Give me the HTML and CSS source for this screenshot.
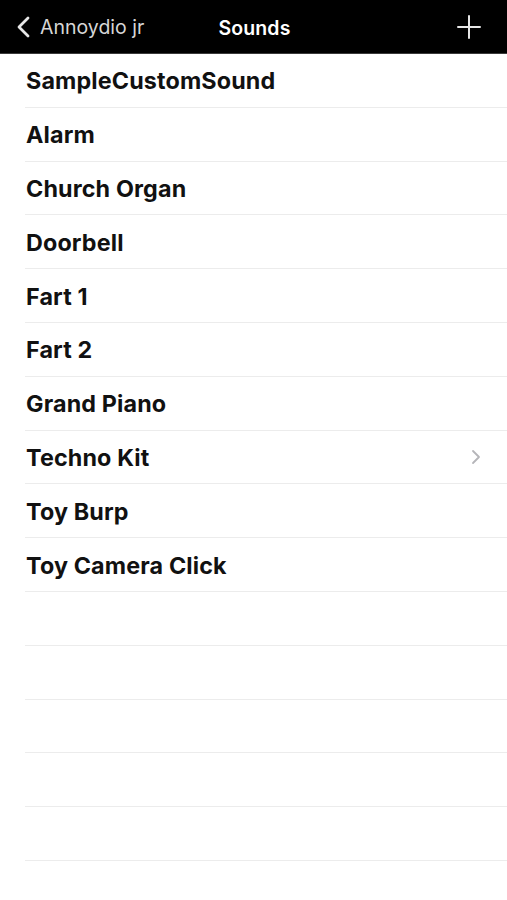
FILE: index.html
```html
<!DOCTYPE html>
<html>
<head>
<meta charset="utf-8">
<link rel="stylesheet" href="styles.css">
</head>
<body>
<header class="nav">
  <div class="nav-left">
    <svg class="back" width="16" height="24" viewBox="0 0 16 24"><path d="M13 3 L4 12 L13 21" fill="none" stroke="#e6e6e6" stroke-width="2.8" stroke-linecap="round" stroke-linejoin="round"/></svg>
    <span class="back-label">Annoydio jr</span>
  </div>
  <div class="nav-title">Sounds</div>
  <div class="nav-right">
    <svg width="24" height="24" viewBox="0 0 24 24"><path d="M12 1 V23 M1 12 H23" stroke="#e6e6e6" stroke-width="2" stroke-linecap="round"/></svg>
  </div>
</header>
<ul class="list">
  <li class="row"><span class="label">SampleCustomSound</span></li>
  <li class="row"><span class="label">Alarm</span></li>
  <li class="row"><span class="label">Church Organ</span></li>
  <li class="row"><span class="label">Doorbell</span></li>
  <li class="row"><span class="label">Fart 1</span></li>
  <li class="row"><span class="label">Fart 2</span></li>
  <li class="row"><span class="label">Grand Piano</span></li>
  <li class="row"><span class="label">Techno Kit</span><svg class="chev" width="10" height="16" viewBox="0 0 10 16"><path d="M2 2 L8 8 L2 14" fill="none" stroke="#b5b5b9" stroke-width="1.8" stroke-linecap="round" stroke-linejoin="round"/></svg></li>
  <li class="row"><span class="label">Toy Burp</span></li>
  <li class="row"><span class="label">Toy Camera Click</span></li>
  <li class="row"></li>
  <li class="row"></li>
  <li class="row"></li>
  <li class="row"></li>
  <li class="row"></li>
</ul>
</body>
</html>
```
FILE: styles.css
```css
* { box-sizing: border-box; }
html, body { margin: 0; padding: 0; background: #fff; }
body { font-family: Inter, "Liberation Sans", sans-serif; width: 507px; height: 900px; overflow: hidden; }
.nav {
  height: 54px;
  background: #000;
  border-bottom: 1px solid #3a3a3a;
  display: grid;
  grid-template-columns: 1fr auto 1fr;
  align-items: center;
  padding: 0 26px 0 15px;
}
.nav-left { display: flex; align-items: center; gap: 9px; color: #d8d8d8; }
.back { margin-top: 1px; }
.back-label { font-size: 19.5px; font-weight: 400; color: #d6d6d6; letter-spacing: 0; }
.nav-title { color: #fff; font-size: 19.5px; font-weight: 600; margin-left: 13px; margin-top: 2px; letter-spacing: 0.1px; }
.nav-right { display: flex; justify-content: flex-end; align-items: center; margin-top: 1px; }
.list { list-style: none; margin: 0; padding: 0 0 0 25px; }
.row {
  height: 53.8px;
  border-bottom: 1px solid #ececec;
  display: flex;
  align-items: center;
  justify-content: space-between;
  padding: 0 25px 0 1px;
}
.label { font-size: 23.3px; font-weight: 700; color: #111; letter-spacing: 0.15px; margin-top: 1px; }
.chev { margin-right: 1px; }
```
